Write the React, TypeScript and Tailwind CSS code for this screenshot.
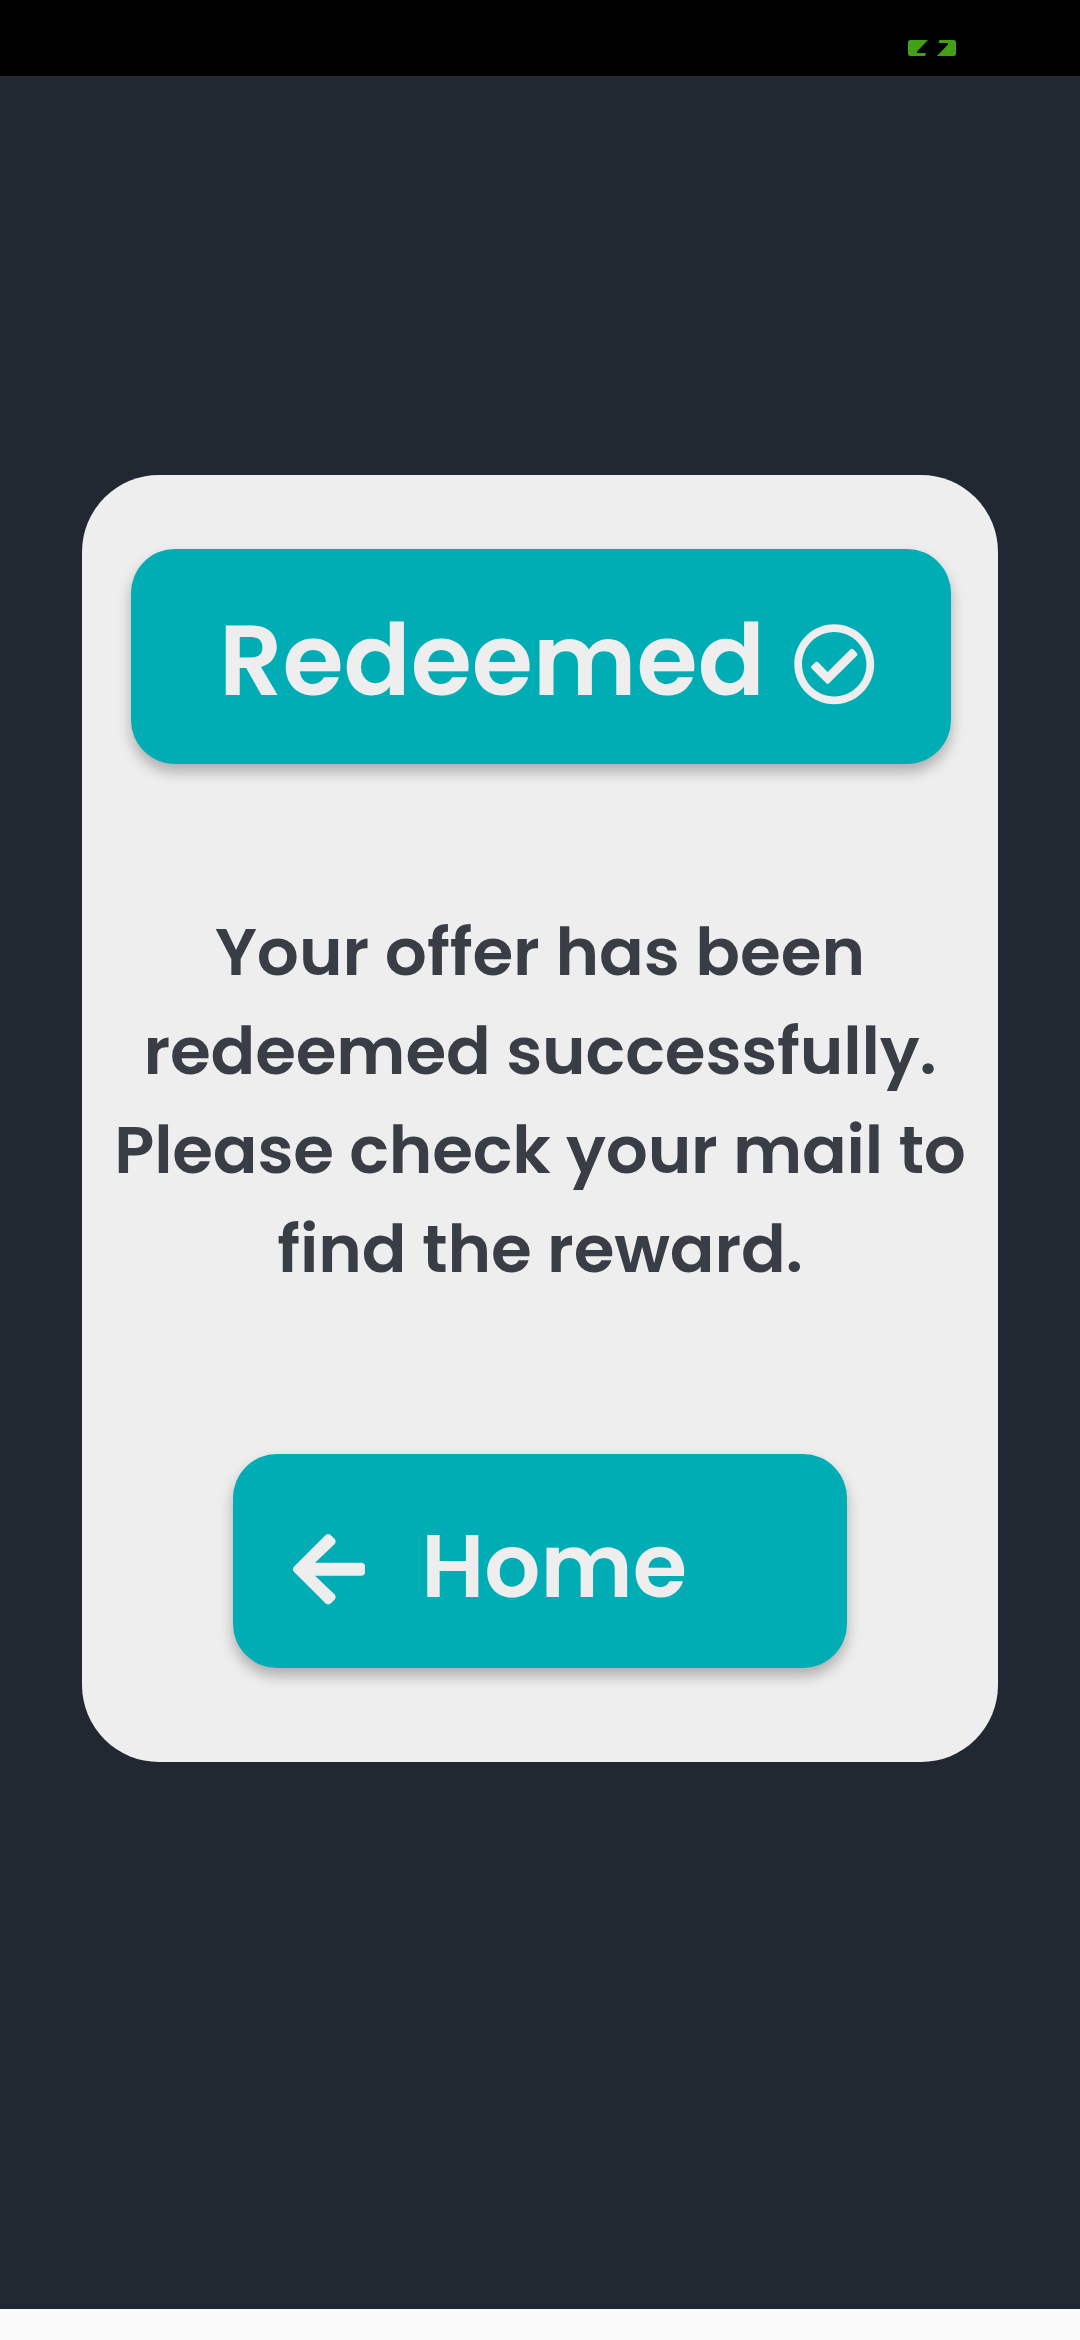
import { FaArrowLeft, FaRegCheckCircle } from "react-icons/fa";

function StatusBar() {
  return (
    <header className="flex h-[76px] shrink-0 justify-end bg-black pt-10 pr-[124px]">
      <svg width="48" height="16" viewBox="0 0 48 16" fill="#43a016">
        <path d="M2.5 0H20L9 11.5V13H18L17 16H2.5Q0 16 0 13.5V2.5Q0 0 2.5 0Z" />
        <path d="M31.5 0H45.5Q48 0 48 2.5V13.5Q48 16 45.5 16H29L40 4.5V3H30.5Z" />
      </svg>
    </header>
  );
}

export default function App() {
  return (
    <div className="flex h-[2340px] w-[1080px] flex-col bg-[#222831] font-['Poppins','Inter',sans-serif] font-semibold [font-feature-settings:'cv11']">
      <StatusBar />
      <main className="flex grow flex-col items-center pt-[398.5px]">
        <section className="flex h-[1287px] w-[916px] flex-col items-center rounded-[77px] bg-[#eeeeee] pt-[74.5px]">
          <div className="ml-[2px] flex h-[214.5px] w-[819.5px] shrink-0 rounded-[44px] bg-[#00adb5] pl-[87.75px] text-[#eeeeee] shadow-[0_8px_14px_rgba(0,0,0,0.27)]">
            <h1 className="mt-[51.5px] w-[573.5px] text-[99px] leading-[120px] whitespace-nowrap">Redeemed</h1>
            <FaRegCheckCircle className="mt-[73.5px] size-[82.5px] shrink-0" />
          </div>
          <p className="mt-[139px] flex flex-col items-center text-[66px] leading-[99px] whitespace-nowrap text-[#393e46]">
            <span className="tracking-[-0.03px]">Your offer has been</span>
            <span className="tracking-[-0.12px]">redeemed successfully.</span>
            <span className="tracking-[-0.2px]">Please check your mail to</span>
            <span className="tracking-[-0.12px]">find the reward.</span>
          </p>
          <button className="mt-[155px] flex h-[214.5px] w-[613.5px] shrink-0 rounded-[44px] bg-[#00adb5] pl-[59.5px] text-[#eeeeee] shadow-[0_8px_14px_rgba(0,0,0,0.27)]">
            <FaArrowLeft className="mt-[74px] h-[82.5px] w-[72.2px] shrink-0" />
            <span className="mt-[53px] ml-[56.3px] text-[88px] leading-[120px] whitespace-nowrap">Home</span>
          </button>
        </section>
      </main>
      <footer className="h-[31px] shrink-0 bg-[#fafafa]" />
    </div>
  );
}
